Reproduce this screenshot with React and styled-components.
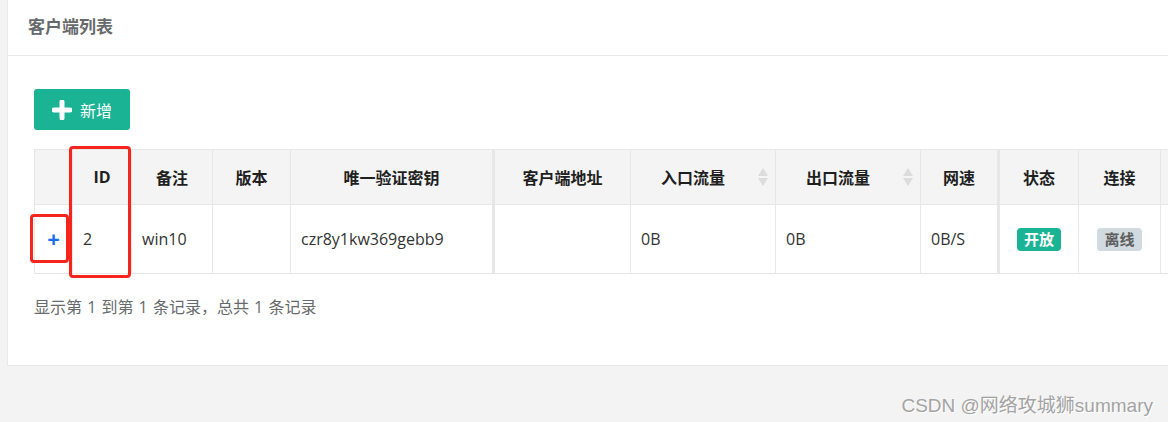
import React from 'react'
import styled, { createGlobalStyle } from 'styled-components'

const Global = createGlobalStyle`
  html, body { margin: 0; padding: 0; overflow: hidden; }
  body {
    background: #f3f3f4;
    font-family: "Open Sans", "Noto Sans CJK SC", sans-serif;
    color: #333;
  }
`

const Page = styled.div`
  width: 1168px;
  height: 422px;
  overflow: hidden;
  padding-left: 7px;
  box-sizing: border-box;
`

const Panel = styled.div`
  background: #fff;
  border-left: 1px solid #e7eaec;
  border-bottom: 1px solid #e7eaec;
  height: 366px;
  box-sizing: border-box;
  overflow: hidden;
`

const Title = styled.div`
  height: 56px;
  box-sizing: border-box;
  border-bottom: 1px solid #e7eaec;
  padding: 0 0 4px 20px;
  display: flex;
  align-items: center;
  font-size: 17px;
  font-weight: 700;
  color: #676a6c;
`

const Content = styled.div`
  padding: 33px 0 0 26px;
`

const AddButton = styled.button`
  display: inline-flex;
  align-items: center;
  gap: 8px;
  height: 41px;
  width: 96px;
  padding: 0 0 0 18px;
  border: none;
  border-radius: 3px;
  background: #1ab394;
  color: #fff;
  font-family: inherit;
  font-size: 16px;
  box-sizing: border-box;
`

const TableWrap = styled.div`
  position: relative;
  margin-top: 19px;
  width: 1300px;
`

const Table = styled.table`
  border-collapse: collapse;
  table-layout: fixed;
  width: 1300px;
`

const Th = styled.th`
  height: 54px;
  background: #f4f4f4;
  border: 1px solid #e7e7e7;
  ${p => p.$thick && 'border-left: 3px solid #e7e7e7;'}
  font-size: 16px;
  font-weight: 700;
  color: #1f1f1f;
  text-align: center;
  position: relative;
  padding: 0 ${p => (p.$sortable ? '20px' : '0')} 0 0;
`

const Td = styled.td`
  height: 68px;
  border: 1px solid #e7e7e7;
  ${p => p.$thick && 'border-left: 3px solid #e7e7e7;'}
  font-size: 16px;
  color: #333;
  padding: 0 10px;
  text-align: ${p => (p.$center ? 'center' : 'left')};
`

const Sort = styled.span`
  position: absolute;
  right: 7px;
  top: 18px;
  display: flex;
  flex-direction: column;
  gap: 2px;
  i {
    width: 0;
    height: 0;
    border-left: 5px solid transparent;
    border-right: 5px solid transparent;
  }
  i:first-child { border-bottom: 8px solid #dcdcdc; }
  i:last-child { border-top: 8px solid #dcdcdc; }
`

const Expand = styled.span`
  color: #1a6ef0;
  font-size: 22px;
  font-weight: 700;
  line-height: 1;
`

const Badge = styled.span`
  display: inline-block;
  padding: 0 7px;
  border-radius: 4px;
  font-size: 15px;
  font-weight: 700;
  line-height: 23px;
  background: ${p => (p.$on ? '#1ab394' : '#d1dade')};
  color: ${p => (p.$on ? '#fff' : '#5e5e5e')};
`

const Mark = styled.div`
  position: absolute;
  border: 3px solid #f5241c;
  border-radius: 4px;
  box-sizing: border-box;
  left: ${p => p.$l}px;
  top: ${p => p.$t}px;
  width: ${p => p.$w}px;
  height: ${p => p.$h}px;
`

const Summary = styled.div`
  margin-top: 20px;
  font-size: 16px;
  word-spacing: 1px;
  color: #676a6c;
`

const Watermark = styled.div`
  text-align: right;
  padding: 24px 15px 0 0;
  font-family: "Liberation Sans", "Noto Sans CJK SC", sans-serif;
  font-size: 19px;
  color: #a3a3a3;
  text-shadow: 1px 1px 0 #fff;
`

const cols = [38, 59, 81, 78, 203, 137, 145, 145, 78, 80, 82, 174]

const Plus = () => (
  <svg width="20" height="20" viewBox="0 0 20 20">
    <path d="M10 2v16M2 10h16" stroke="#fff" strokeWidth="5" strokeLinecap="round" />
  </svg>
)

export default function App() {
  return (
    <Page>
      <Global />
      <Panel>
        <Title>客户端列表</Title>
        <Content>
          <AddButton><Plus />新增</AddButton>
          <TableWrap>
            <Table>
              <colgroup>
                {cols.map((w, i) => <col key={i} style={{ width: w }} />)}
              </colgroup>
              <thead>
                <tr>
                  <Th></Th>
                  <Th>ID</Th>
                  <Th>备注</Th>
                  <Th>版本</Th>
                  <Th>唯一验证密钥</Th>
                  <Th $thick>客户端地址</Th>
                  <Th $sortable>入口流量<Sort><i /><i /></Sort></Th>
                  <Th $sortable>出口流量<Sort><i /><i /></Sort></Th>
                  <Th>网速</Th>
                  <Th $thick>状态</Th>
                  <Th>连接</Th>
                  <Th></Th>
                </tr>
              </thead>
              <tbody>
                <tr>
                  <Td $center><Expand>+</Expand></Td>
                  <Td>2</Td>
                  <Td>win10</Td>
                  <Td></Td>
                  <Td>czr8y1kw369gebb9</Td>
                  <Td $thick></Td>
                  <Td>0B</Td>
                  <Td>0B</Td>
                  <Td>0B/S</Td>
                  <Td $thick $center><Badge $on>开放</Badge></Td>
                  <Td $center><Badge>离线</Badge></Td>
                  <Td></Td>
                </tr>
              </tbody>
            </Table>
            <Mark $l={-4} $t={65} $w={39} $h={49} />
            <Mark $l={35} $t={-3} $w={62} $h={132} />
          </TableWrap>
          <Summary>显示第 1 到第 1 条记录，总共 1 条记录</Summary>
        </Content>
      </Panel>
      <Watermark>CSDN @网络攻城狮summary</Watermark>
    </Page>
  )
}
